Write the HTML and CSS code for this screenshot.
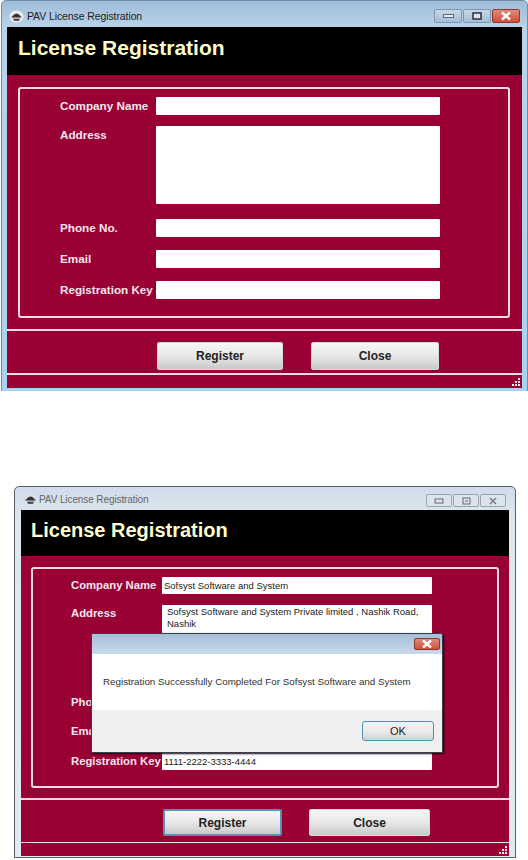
FILE: index.html
```html
<!DOCTYPE html>
<html lang="en">
<head>
  <meta charset="UTF-8" />
  <title>PAV License Registration</title>
  <link rel="stylesheet" href="styles.css">
</head>
<body>
  <!-- empty form -->
  <div class="win win-active">
    <div class="titlebar">
      <svg class="app-icon" width="15" height="13" viewBox="0 0 15 13"><ellipse cx="7.5" cy="6.5" rx="7" ry="6" fill="#eee"/><path d="M4 5.5 Q7.5 1.5 11 5.5 L13 7.5 H2 Z" fill="#333"/><path d="M4 8.5 H11 L10 11 H5 Z" fill="#555"/></svg>
      <span class="title-text">PAV License Registration</span>
      <div class="controls">
        <span class="ctl"><svg width="11" height="4" viewBox="0 0 11 4"><rect x="0.5" y="0.5" width="10" height="3" fill="#e8eef4" stroke="#5a6c80"/></svg></span>
        <span class="ctl"><svg width="10" height="8" viewBox="0 0 10 8"><rect x="1" y="1" width="8" height="6" fill="#d8e4ee" stroke="#223" stroke-width="1.4"/></svg></span>
        <span class="ctl ctl-close"><svg width="14" height="10" viewBox="0 0 14 10"><path d="M3 1.5 L11 8.5 M11 1.5 L3 8.5" stroke="#fff" stroke-width="2.4"/></svg></span>
      </div>
    </div>
    <div class="client">
      <div class="banner"><h1>License Registration</h1></div>
      <div class="panel">
        <div class="row row-first"><label>Company Name</label><div class="field"></div></div>
        <div class="row row-area"><label>Address</label><div class="field field-area"></div></div>
        <div class="row"><label>Phone No.</label><div class="field"></div></div>
        <div class="row"><label>Email</label><div class="field"></div></div>
        <div class="row"><label>Registration Key</label><div class="field"></div></div>
      </div>
      <div class="actions">
        <button class="btn">Register</button>
        <button class="btn btn-wide">Close</button>
      </div>
      <div class="statusbar"><svg width="8" height="8" viewBox="0 0 8 8" fill="#eee"><rect x="6" y="0" width="2" height="2"/><rect x="3" y="3" width="2" height="2"/><rect x="6" y="3" width="2" height="2"/><rect x="0" y="6" width="2" height="2"/><rect x="3" y="6" width="2" height="2"/><rect x="6" y="6" width="2" height="2"/></svg></div>
    </div>
  </div>

  <!-- filled form with success message -->
  <div class="win win-idle">
    <div class="titlebar">
      <svg class="app-icon" width="15" height="13" viewBox="0 0 15 13"><path d="M4 5.5 Q7.5 1.5 11 5.5 L13 7.5 H2 Z" fill="#333"/><path d="M4 8.5 H11 L10 11 H5 Z" fill="#555"/></svg>
      <span class="title-text">PAV License Registration</span>
      <div class="controls">
        <span class="ctl"><svg width="10" height="6" viewBox="0 0 10 6"><rect x="1" y="1" width="8" height="4" fill="none" stroke="#667"/></svg></span>
        <span class="ctl"><svg width="9" height="8" viewBox="0 0 9 8"><rect x="1" y="1" width="7" height="6" fill="none" stroke="#667"/><path d="M3 4 H6" stroke="#667"/></svg></span>
        <span class="ctl"><svg width="10" height="8" viewBox="0 0 10 8"><path d="M2 1 L8 7 M8 1 L2 7" stroke="#778" stroke-width="1.4"/></svg></span>
      </div>
    </div>
    <div class="client">
      <div class="banner"><h1>License Registration</h1></div>
      <div class="panel">
        <div class="row row-first"><label>Company Name</label><div class="field">Sofsyst Software and System</div></div>
        <div class="row row-area"><label>Address</label><div class="field field-area">Sofsyst Software and System Private limited , Nashik Road, Nashik</div></div>
        <div class="row"><label>Phone No.</label><div class="field"></div></div>
        <div class="row"><label>Email</label><div class="field"></div></div>
        <div class="row"><label>Registration Key</label><div class="field">1111-2222-3333-4444</div></div>
      </div>
      <div class="actions">
        <button class="btn btn-focus">Register</button>
        <button class="btn">Close</button>
      </div>
      <div class="statusbar"><svg width="8" height="8" viewBox="0 0 8 8" fill="#eee"><rect x="6" y="0" width="2" height="2"/><rect x="3" y="3" width="2" height="2"/><rect x="6" y="3" width="2" height="2"/><rect x="0" y="6" width="2" height="2"/><rect x="3" y="6" width="2" height="2"/><rect x="6" y="6" width="2" height="2"/></svg></div>
    </div>

    <div class="dialog">
      <div class="dialog-title">
        <span class="dialog-close"><svg width="14" height="10" viewBox="0 0 14 10"><path d="M3 1.5 L11 8.5 M11 1.5 L3 8.5" stroke="#fff" stroke-width="2.4"/></svg></span>
      </div>
      <div class="dialog-body">Registration Successfully Completed For Sofsyst Software and System</div>
      <div class="dialog-foot"><button class="btn-ok">OK</button></div>
    </div>
  </div>
</body>
</html>
```

FILE: styles.css
```css
body {
  margin: 0;
  background: #fff;
  font-family: "Liberation Sans", Arial, sans-serif;
  height: 860px;
  overflow: hidden;
}
.win {
  position: relative;
  box-sizing: border-box;
  border-radius: 5px 5px 0 0;
}
.win-active {
  width: 527px;
  height: 391px;
  margin-left: 1px;
  padding: 0 5px 4px 5px;
  background: linear-gradient(to bottom, #9fbcd8, #b9d3e8 27px, #a6d4ee);
  border: 1px solid #6d8ea8;
  border-bottom: 0;
}
.win-idle {
  width: 502px;
  height: 372px;
  margin: 95px 0 0 14px;
  padding: 0 6px 5px 6px;
  background: linear-gradient(to bottom, #cfdbe7, #dde7f0 30px, #e2eaf3);
  border: 1px solid #56606a;
}
.titlebar {
  display: flex;
  align-items: center;
  box-sizing: border-box;
  height: 26px;
  padding-top: 4px;
  font-size: 10.5px;
  letter-spacing: -0.1px;
  color: #222;
}
.win-idle .titlebar {
  height: 23px;
  padding-top: 2px;
  font-size: 10px;
  color: #666;
}
.app-icon {
  margin-right: 3px;
  margin-left: 2px;
}
.win-idle .app-icon {
  margin-right: 1px;
}
.controls {
  margin-left: auto;
  display: flex;
  gap: 1px;
  align-self: flex-start;
  padding-right: 2px;
}
.win-idle .controls {
  padding-right: 3px;
}
.ctl {
  display: flex;
  align-items: center;
  justify-content: center;
  box-sizing: border-box;
  width: 28px;
  height: 14px;
  margin-top: 4px;
  background: linear-gradient(to bottom, #c8d8e8, #a4bdd4);
  border: 1px solid #7f98ae;
  border-radius: 2px;
}
.win-idle .ctl {
  width: 26px;
  height: 13px;
  margin-top: 5px;
  background: #dbe4ed;
  border-color: #9aa5b0;
}
.ctl-close {
  background: linear-gradient(to bottom, #e08a7c, #cf4f38);
  border-color: #8c3a30;
}
.client {
  background: #990033;
}
.banner {
  background: #000;
  box-sizing: border-box;
  height: 48px;
  display: flex;
  align-items: center;
  padding: 0 0 6px 11px;
}
.win-idle .banner {
  height: 46px;
  padding: 0 0 6px 10px;
}
.banner h1 {
  margin: 0;
  font-size: 21px;
  font-weight: bold;
  color: #ffffcc;
}
.win-idle .banner h1 {
  font-size: 20px;
}
.panel {
  box-sizing: border-box;
  margin: 12px 12px 0 11px;
  height: 231px;
  padding: 8px 0 0 40px;
  border: 2px solid #f6dbe6;
  border-radius: 3px;
}
.win-idle .panel {
  margin: 11px 10px 0 10px;
  height: 221px;
  padding: 8px 0 0 38px;
}
.row {
  display: flex;
  margin-bottom: 13px;
}
.row-first {
  margin-bottom: 11px;
}
.row-area {
  margin-bottom: 15px;
}
.win-idle .row {
  margin-bottom: 12.5px;
}
.win-idle .row-first {
  margin-bottom: 11px;
}
.row label {
  width: 96px;
  flex: none;
  padding-top: 2px;
  font-size: 11.7px;
  font-weight: bold;
  color: #f8e6ee;
  white-space: nowrap;
}
.win-idle .row label {
  width: 91px;
  font-size: 11.3px;
}
.field {
  box-sizing: border-box;
  width: 284px;
  height: 18px;
  padding: 2px 2px;
  background: #fff;
  border-radius: 1px;
  font-size: 9.5px;
  line-height: 14px;
  color: #222;
}
.win-idle .field {
  width: 270px;
  height: 17px;
}
.field-area {
  height: 78px;
  padding: 1px 5px;
  line-height: 12px;
}
.win-idle .field-area {
  height: 76px;
}
.actions {
  box-sizing: border-box;
  margin-top: 11px;
  height: 46px;
  padding: 11px 0 0 150px;
  display: flex;
  gap: 28px;
  border-top: 2px solid #f6dbe6;
  border-bottom: 2px solid #f6dbe6;
}
.win-idle .actions {
  margin-top: 10px;
  height: 45px;
  padding: 9px 0 0 142px;
  gap: 27px;
  border-width: 1px;
  border-top-width: 2px;
}
.btn {
  width: 126px;
  height: 28px;
  padding: 0;
  border: 1px solid #d8d8d8;
  border-radius: 2px;
  background: linear-gradient(to bottom, #f6f6f6, #e8e8e8 50%, #c9c9c9);
  font-family: "Liberation Sans", Arial, sans-serif;
  font-size: 12px;
  font-weight: bold;
  color: #222;
}
.btn-wide {
  width: 128px;
}
.win-idle .btn {
  width: 121px;
  height: 27px;
}
.win-idle .btn-focus {
  width: 119px;
  border: 2px solid #5b8fb5;
}
.statusbar {
  height: 13px;
  display: flex;
  justify-content: flex-end;
  align-items: flex-end;
  padding: 0 2px 2px 0;
  box-sizing: border-box;
}
.dialog {
  position: absolute;
  left: 76px;
  top: 146px;
  width: 350px;
  box-shadow: 1px 1px 2px #220010;
  border: 1px solid #33414d;
  border-radius: 3px 3px 0 0;
  background: #fff;
}
.dialog-title {
  height: 20px;
  background: linear-gradient(to bottom, #a5bfd9, #c9d9ea);
  display: flex;
  justify-content: flex-end;
  padding-right: 2px;
}
.dialog-close {
  display: flex;
  align-items: center;
  justify-content: center;
  box-sizing: border-box;
  margin-top: 4px;
  width: 26px;
  height: 12px;
  background: linear-gradient(to bottom, #e08a7c, #cf4f38);
  border: 1px solid #8c3a30;
  border-radius: 2px;
}
.dialog-body {
  height: 56px;
  padding-left: 11px;
  line-height: 55px;
  font-size: 9.8px;
  color: #333;
  white-space: nowrap;
}
.dialog-foot {
  height: 42px;
  background: #f0f0f0;
  display: flex;
  justify-content: flex-end;
  align-items: flex-start;
  padding: 11px 8px 0 0;
  box-sizing: border-box;
}
.btn-ok {
  width: 72px;
  height: 20px;
  padding: 0;
  border: 1px solid #4d8fb3;
  border-radius: 3px;
  background: linear-gradient(to bottom, #f2f2f2, #ebebeb 50%, #d3d3d3);
  font-family: "Liberation Sans", Arial, sans-serif;
  font-size: 11px;
  color: #222;
}
```
